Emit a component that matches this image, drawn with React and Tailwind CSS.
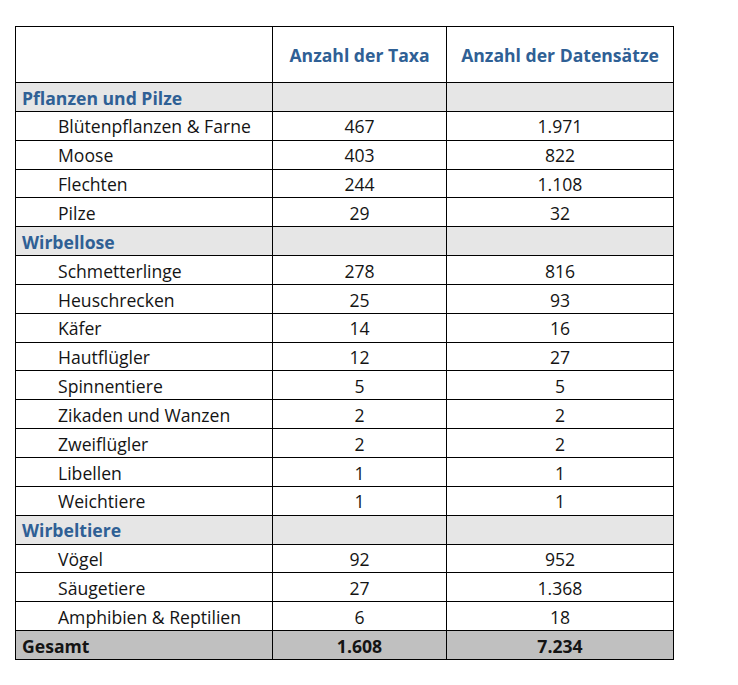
import React from "react";

const groups = [
  {
    name: "Pflanzen und Pilze",
    rows: [
      ["Blütenpflanzen & Farne", "467", "1.971"],
      ["Moose", "403", "822"],
      ["Flechten", "244", "1.108"],
      ["Pilze", "29", "32"],
    ],
  },
  {
    name: "Wirbellose",
    rows: [
      ["Schmetterlinge", "278", "816"],
      ["Heuschrecken", "25", "93"],
      ["Käfer", "14", "16"],
      ["Hautflügler", "12", "27"],
      ["Spinnentiere", "5", "5"],
      ["Zikaden und Wanzen", "2", "2"],
      ["Zweiflügler", "2", "2"],
      ["Libellen", "1", "1"],
      ["Weichtiere", "1", "1"],
    ],
  },
  {
    name: "Wirbeltiere",
    rows: [
      ["Vögel", "92", "952"],
      ["Säugetiere", "27", "1.368"],
      ["Amphibien & Reptilien", "6", "18"],
    ],
  },
];

const cell = "border border-black h-[28.85px] p-0 pt-[3px] leading-none";

export default function App() {
  return (
    <div className="w-[738px] h-[685px] bg-white pt-[26px] pl-[15px] text-[17.6px] text-[#141414] font-['Open_Sans',sans-serif]">
      <table className="border-collapse table-fixed w-[658px]">
        <colgroup>
          <col className="w-[257px]" />
          <col className="w-[174px]" />
          <col className="w-[227px]" />
        </colgroup>
        <thead>
          <tr>
            <th className="border border-black h-[56px] pt-[2px]"></th>
            <th className="border border-black h-[56px] pt-[2px] text-center font-bold text-[#2f6095]">Anzahl der Taxa</th>
            <th className="border border-black h-[56px] pt-[2px] text-center font-bold text-[#2f6095]">Anzahl der Datensätze</th>
          </tr>
        </thead>
        <tbody>
          {groups.map((g) => (
            <React.Fragment key={g.name}>
              <tr className="bg-[#e6e6e6]">
                <td className={`${cell} pl-[6px] font-bold text-[#2f6095]`}>{g.name}</td>
                <td className={cell}></td>
                <td className={cell}></td>
              </tr>
              {g.rows.map((r) => (
                <tr key={r[0]}>
                  <td className={`${cell} pl-[42px]`}>{r[0]}</td>
                  <td className={`${cell} text-center`}>{r[1]}</td>
                  <td className={`${cell} text-center`}>{r[2]}</td>
                </tr>
              ))}
            </React.Fragment>
          ))}
          <tr className="bg-[#c0c0c0] font-bold">
            <td className={`${cell} pl-[6px]`}>Gesamt</td>
            <td className={`${cell} text-center`}>1.608</td>
            <td className={`${cell} text-center`}>7.234</td>
          </tr>
        </tbody>
      </table>
    </div>
  );
}
